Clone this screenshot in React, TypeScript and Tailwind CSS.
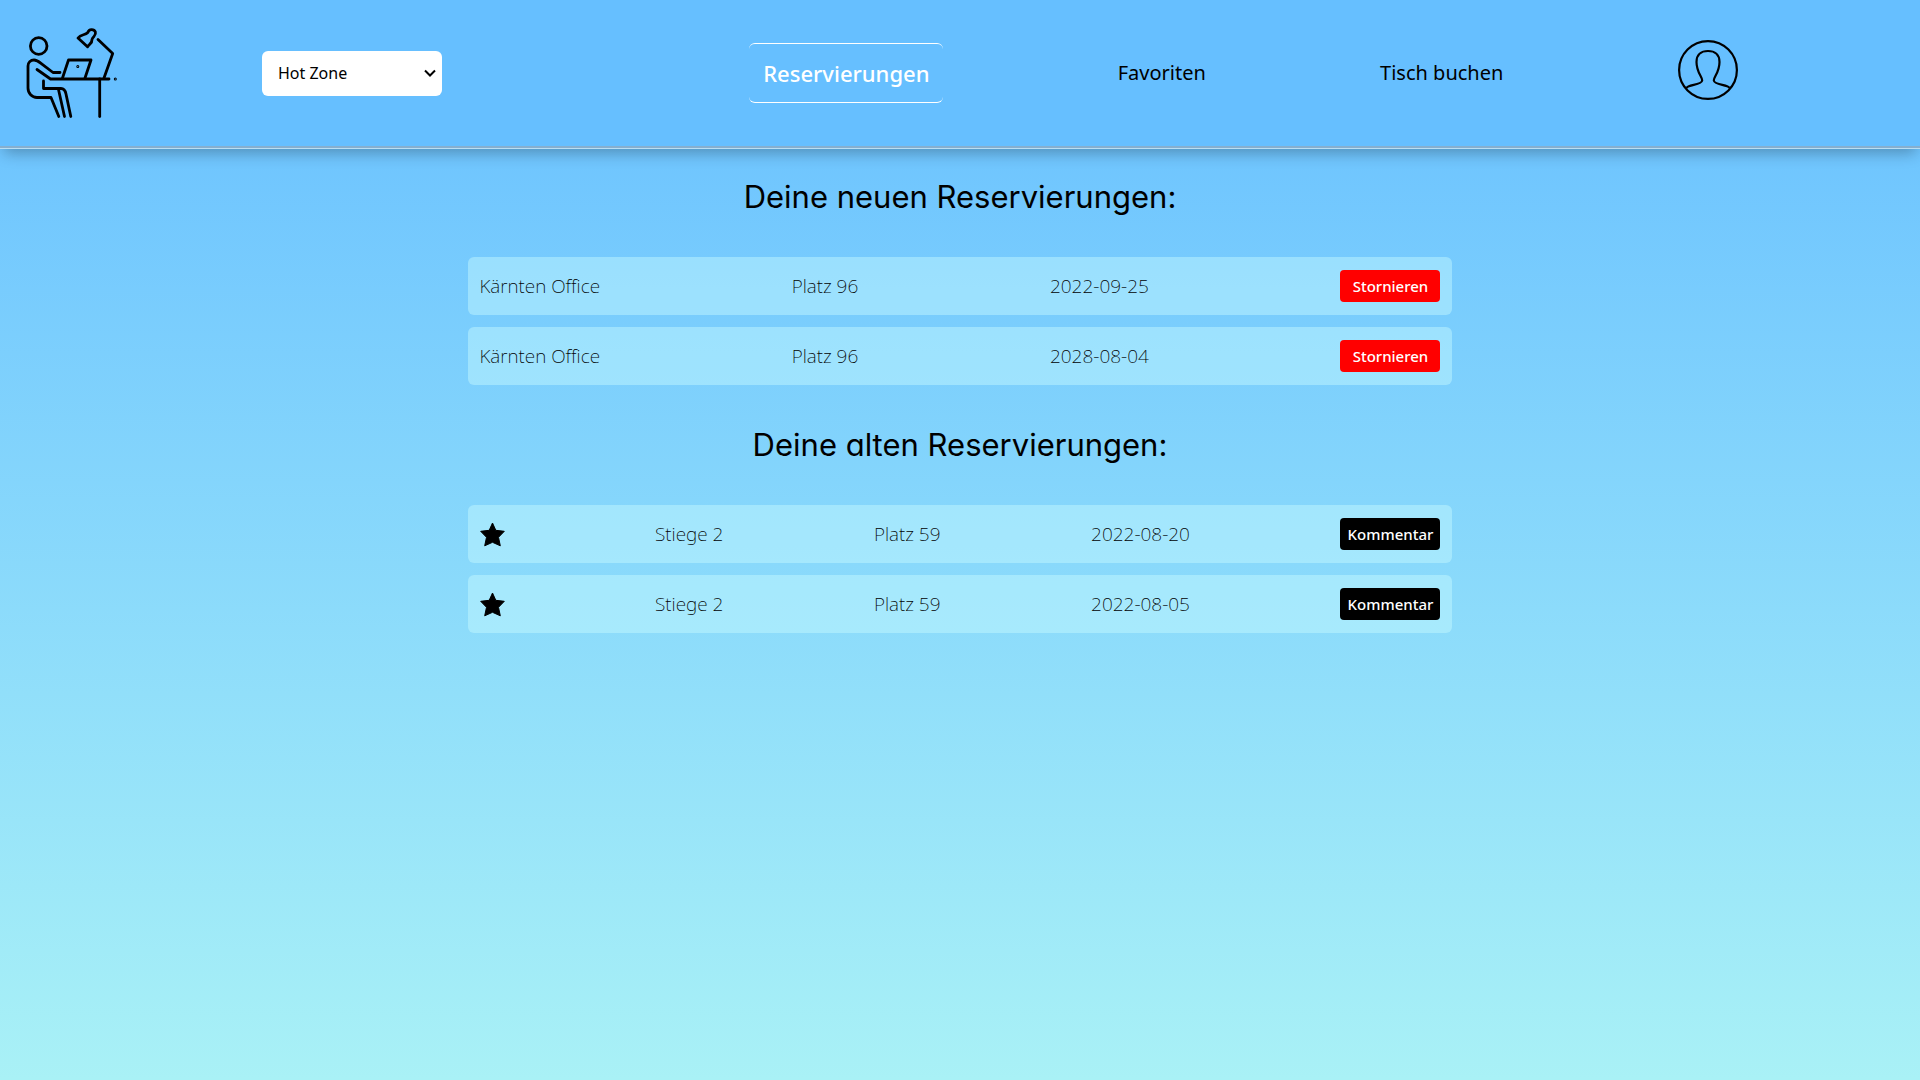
import { useState } from "react";

type Reservation = { place: string; seat: string; date: string };

const upcoming: Reservation[] = [
  { place: "Kärnten Office", seat: "Platz 96", date: "2022-09-25" },
  { place: "Kärnten Office", seat: "Platz 96", date: "2028-08-04" },
];

const past: Reservation[] = [
  { place: "Stiege 2", seat: "Platz 59", date: "2022-08-20" },
  { place: "Stiege 2", seat: "Platz 59", date: "2022-08-05" },
];

function Logo() {
  return (
    <svg
      viewBox="26 27 92 91"
      className="h-[91px] w-[92px]"
      fill="none"
      stroke="black"
      strokeWidth="2.8"
      strokeLinecap="round"
      strokeLinejoin="round"
      aria-hidden="true"
    >
      <circle cx="38.7" cy="45" r="8.3" />
      <path d="M60 71.5H53L41 62.3C38.5 60.3 36.5 59 34 59C30.5 59 28 61.5 28 65V87C28 92.5 32 96.5 37 96.5H51L58.8 115.5" />
      <path d="M37 68.5L50.5 78H109" />
      <path d="M43.5 80V87.5H61C64 87.5 65.3 89.5 66 93L70.8 115.5M58.5 88.5L64.5 115.5" />
      <path d="M62.5 77L68.5 59H91L85 77" />
      <path d="M99.7 78V115.5" />
      <path d="M98 38.5L112.7 52.5L104 77" />
      <path d="M78 37C81 33 85 34.5 87.8 31.5C89 27.8 94 27.8 95.4 31C96.5 34.5 92.8 35.5 92 38.5C92.3 42 90 42.5 87.5 45.8Z" />
      <circle cx="77.8" cy="65.5" r="0.5" strokeWidth="2" />
      <circle cx="115.3" cy="78" r="0.5" strokeWidth="2" />
    </svg>
  );
}

function Avatar() {
  return (
    <svg viewBox="0 0 60 60" className="size-[60px]" fill="none" stroke="black" strokeWidth="2.2" aria-hidden="true">
      <circle cx="30" cy="30" r="28.9" />
      <path d="M8.5 48C10 44.5 23.8 45.2 24.2 40.5C24.4 37 18.5 32.5 18.5 22C18.5 15 23 11 30 11C37 11 41.5 15 41.5 22C41.5 32.5 35.6 37 35.8 40.5C36.2 45.2 50 44.5 51.5 48" />
    </svg>
  );
}

function Star() {
  return (
    <svg viewBox="0 0 25 25" className="size-[25px]" stroke="black" strokeLinejoin="round" aria-hidden="true">
      <path d="M12.5 1L15.8 8.3L24.3 9.3L18.5 15.3L20.3 23.8L12.5 20.3L4.7 23.8L6.5 15.3L0.7 9.3L9.2 8.3Z" />
    </svg>
  );
}

function Section({ title, items, old }: { title: string; items: Reservation[]; old?: boolean }) {
  return (
    <section>
      <h2 className="mb-9 pt-6 text-center font-['Inter',sans-serif] text-[31px] leading-[48px] [font-feature-settings:'cv11']">
        {title}
      </h2>
      <ul className="mx-auto w-[51.3%]">
        {items.map((r) => (
          <li
            key={r.date}
            className="mb-3 flex h-[58px] items-center justify-between rounded-md bg-[#c8faff]/45 px-3 text-[19px] font-extralight"
          >
            {old && (
              <button type="button" aria-label="Favorit">
                <Star />
              </button>
            )}
            <span>{r.place}</span>
            <span>{r.seat}</span>
            <span>{r.date}</span>
            {old ? (
              <button type="button" className="h-8 w-[100px] rounded bg-black text-[15px] font-medium text-white">
                Kommentar
              </button>
            ) : (
              <button type="button" className="h-8 w-[100px] rounded bg-[#ff0000] text-[15px] font-medium text-white">
                Stornieren
              </button>
            )}
          </li>
        ))}
      </ul>
    </section>
  );
}

export default function App() {
  const [zone, setZone] = useState("Hot Zone");
  return (
    <div className="min-h-screen bg-linear-to-b from-[#66beff] to-[#a9f1f6] font-['Noto_Sans',sans-serif] text-black">
      <header className="border-b border-[#b8dff5] bg-[#66bfff] shadow-[0_8px_14px_-4px_rgba(0,0,0,0.28)]">
        <div className="flex h-[148px] items-center border-b-2 border-[#86afcf]">
          <a href="#start" aria-label="Startseite" className="ml-[26px]">
            <Logo />
          </a>
          <div className="relative ml-36">
            <select
              aria-label="Zone"
              value={zone}
              onChange={(e) => setZone(e.target.value)}
              className="block h-[45px] w-[180px] appearance-none rounded-md bg-white px-4 text-base"
            >
              <option>Hot Zone</option>
            </select>
            <svg
              viewBox="0 0 12 8"
              className="pointer-events-none absolute top-[18px] right-1.5 h-2 w-3"
              fill="none"
              stroke="black"
              strokeWidth="2"
              aria-hidden="true"
            >
              <path d="M1 1.5L6 6.5L11 1.5" />
            </svg>
          </div>
          <nav className="mr-[9.5%] ml-[16%] flex flex-1 items-center justify-between text-xl">
            <a
              href="#reservierungen"
              aria-current="page"
              className="rounded-md border-y border-white px-3.5 py-3 text-[22px] leading-[34px] font-medium text-white"
            >
              Reservierungen
            </a>
            <a href="#favoriten">Favoriten</a>
            <a href="#buchen">Tisch buchen</a>
            <a href="#profil" aria-label="Profil" className="mb-1.5">
              <Avatar />
            </a>
          </nav>
        </div>
      </header>
      <main>
        <Section title="Deine neuen Reservierungen:" items={upcoming} />
        <Section title="Deine alten Reservierungen:" items={past} old />
      </main>
    </div>
  );
}
